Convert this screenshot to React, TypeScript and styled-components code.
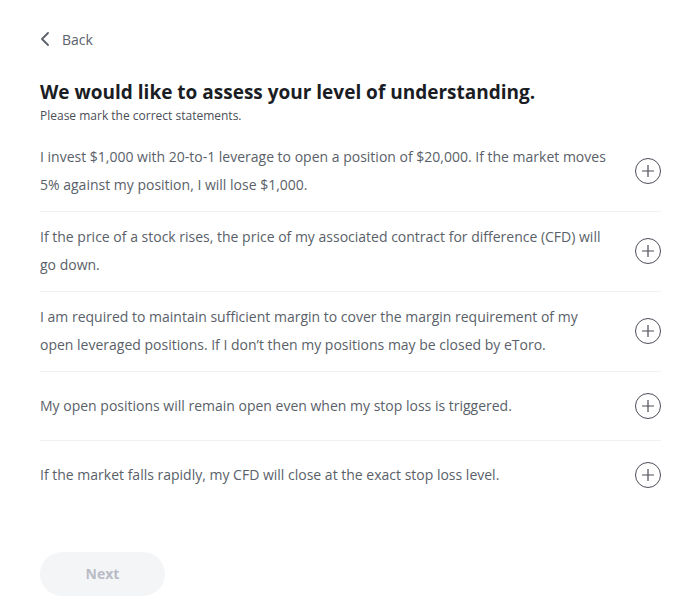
import styled, { createGlobalStyle } from 'styled-components';

const GlobalStyle = createGlobalStyle`
    body {
        margin: 0;
        background: #ffffff;
        font-family: "Open Sans", "Liberation Sans", sans-serif;
    }
`;

const Page = styled.div`
    display: flex;
    flex-direction: column;
    width: 621px;
    padding: 27px 0 0 40px;
`;

const BackLink = styled.a`
    display: flex;
    align-items: center;
    gap: 12px;
    height: 24px;
    color: #5c616c;
    font-size: 14px;
    text-decoration: none;
    cursor: pointer;
`;

const Title = styled.h1`
    margin: 28px 0 0;
    font-size: 19px;
    font-weight: 700;
    line-height: 26px;
    color: #1b1d24;
`;

const Subtitle = styled.p`
    margin: 3px 0 0;
    font-size: 12px;
    line-height: 16px;
    color: #4a4e57;
`;

const StatementList = styled.ul`
    list-style: none;
    margin: 7.5px 0 0;
    padding: 0;
`;

const StatementRow = styled.li`
    display: flex;
    align-items: center;
    gap: 25px;
    min-height: 69px;
    padding: 11.5px 0;
    box-sizing: border-box;
    border-bottom: 1px solid #f1f2f4;
    &:last-child {
        border-bottom: none;
    }
`;

const StatementText = styled.span`
    flex: 1;
    font-size: 14px;
    line-height: 28px;
    color: #5a5f69;
`;

const AddButton = styled.button`
    flex: none;
    display: flex;
    align-items: center;
    justify-content: center;
    width: 26px;
    height: 26px;
    padding: 0;
    border: 1px solid #4a4e57;
    border-radius: 50%;
    background: transparent;
    color: #4a4e57;
    cursor: pointer;
`;

const Footer = styled.div`
    display: flex;
    margin-top: 42px;
`;

const NextButton = styled.button`
    width: 125px;
    height: 44px;
    border: none;
    border-radius: 22px;
    background: #f4f5f7;
    color: #b9bcc6;
    font-family: inherit;
    font-size: 14px;
    font-weight: 700;
    cursor: default;
`;

const statements = [
    'I invest $1,000 with 20-to-1 leverage to open a position of $20,000. If the market moves 5% against my position, I will lose $1,000.',
    'If the price of a stock rises, the price of my associated contract for difference (CFD) will go down.',
    'I am required to maintain sufficient margin to cover the margin requirement of my open leveraged positions. If I don\u2019t then my positions may be closed by eToro.',
    'My open positions will remain open even when my stop loss is triggered.',
    'If the market falls rapidly, my CFD will close at the exact stop loss level.',
];

const ChevronLeft = () => (
    <svg width="10" height="14" viewBox="0 0 10 14" fill="none">
        <path d="M8 1L2 7l6 6" stroke="#5c616c" strokeWidth="1.8" strokeLinecap="round" strokeLinejoin="round" />
    </svg>
);

const PlusIcon = () => (
    <svg width="14" height="14" viewBox="0 0 14 14" fill="none">
        <path d="M7 1v12M1 7h12" stroke="currentColor" strokeWidth="1.2" />
    </svg>
);

export default function App() {
    return (
        <>
            <GlobalStyle />
            <Page>
                <BackLink>
                    <ChevronLeft />
                    Back
                </BackLink>
                <Title>We would like to assess your level of understanding.</Title>
                <Subtitle>Please mark the correct statements.</Subtitle>
                <StatementList>
                    {statements.map((text) => (
                        <StatementRow key={text}>
                            <StatementText>{text}</StatementText>
                            <AddButton aria-label="Mark as correct">
                                <PlusIcon />
                            </AddButton>
                        </StatementRow>
                    ))}
                </StatementList>
                <Footer>
                    <NextButton disabled>Next</NextButton>
                </Footer>
            </Page>
        </>
    );
}
